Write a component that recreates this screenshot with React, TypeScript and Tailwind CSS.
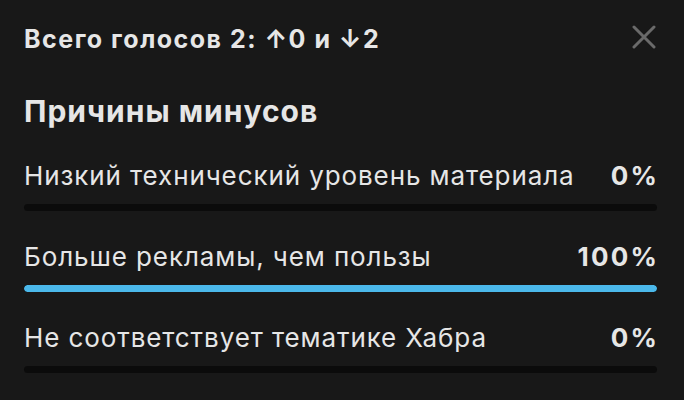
import React from "react";

const rows = [
  { label: "Низкий технический уровень материала", pct: 0 },
  { label: "Больше рекламы, чем пользы", pct: 100 },
  { label: "Не соответствует тематике Хабра", pct: 0 },
];

export default function App() {
  return (
    <div
      className="w-[684px] h-[400px] overflow-hidden bg-[#181818] text-[#e6e6e6] pl-[24px] pr-[27px] pt-[24px]"
      style={{ fontFamily: "Inter, 'Noto Sans', sans-serif" }}
    >
      <div className="flex items-start justify-between">
        <div className="text-[25px] leading-[30px] font-bold tracking-[1.5px]">Всего голосов 2: ↑0 и ↓2</div>
        <svg width="24" height="24" viewBox="0 0 24 24" className="mt-[1px] mr-[1px] text-[#6a6a6a]">
          <path d="M2 2 L22 22 M22 2 L2 22" stroke="currentColor" strokeWidth="3" strokeLinecap="round" />
        </svg>
      </div>
      <div className="mt-[39px] text-[30px] leading-[36px] font-bold tracking-[1px]">Причины минусов</div>
      <div className="mt-[31px] flex flex-col gap-[30px]">
        {rows.map((r) => (
          <div key={r.label} className="flex flex-col gap-[12px]">
            <div className="flex justify-between text-[26px] leading-[32px]">
              <span className="tracking-[0.9px]">{r.label}</span>
              <span className="font-bold tracking-[2.2px] mr-[-2px]">{r.pct}%</span>
            </div>
            <div className="h-[7px] rounded-full bg-[#0b0b0b] overflow-hidden">
              <div className="h-full rounded-full bg-[#4bb8ea]" style={{ width: `${r.pct}%` }} />
            </div>
          </div>
        ))}
      </div>
    </div>
  );
}
